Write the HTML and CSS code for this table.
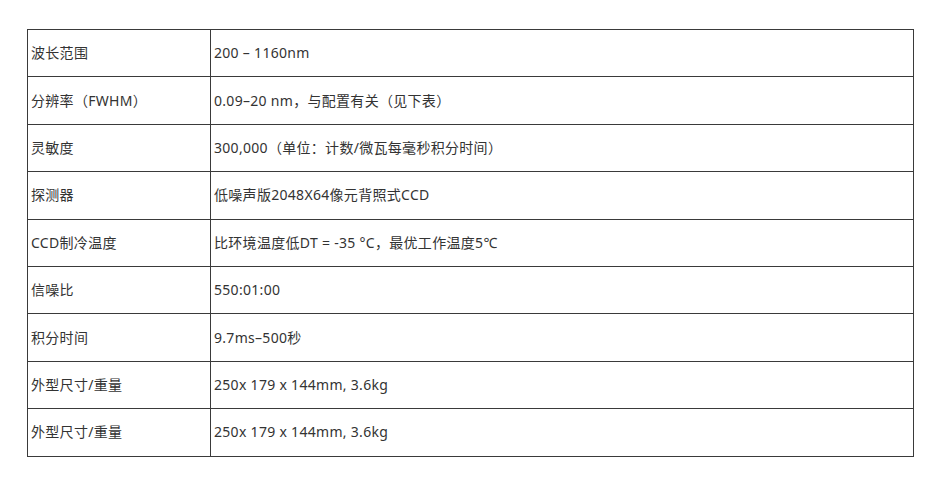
FILE: index.html
```html
<!DOCTYPE html>
<html lang="zh">
<head>
<meta charset="utf-8">
<title>规格参数</title>
<link rel="stylesheet" href="styles.css">
</head>
<body>
<table class="spec">
  <tbody>
    <tr><td class="k">波长范围</td><td class="v">200 – 1160nm</td></tr>
    <tr><td class="k">分辨率（FWHM）</td><td class="v">0.09–20 nm，与配置有关（见下表）</td></tr>
    <tr><td class="k">灵敏度</td><td class="v">300,000（单位：计数/微瓦每毫秒积分时间）</td></tr>
    <tr><td class="k">探测器</td><td class="v">低噪声版2048X64像元背照式CCD</td></tr>
    <tr><td class="k">CCD制冷温度</td><td class="v">比环境温度低DT = -35 °C，最优工作温度5℃</td></tr>
    <tr><td class="k">信噪比</td><td class="v">550:01:00</td></tr>
    <tr><td class="k">积分时间</td><td class="v">9.7ms–500秒</td></tr>
    <tr><td class="k">外型尺寸/重量</td><td class="v">250x 179 x 144mm, 3.6kg</td></tr>
    <tr><td class="k">外型尺寸/重量</td><td class="v">250x 179 x 144mm, 3.6kg</td></tr>
  </tbody>
</table>
</body>
</html>
```
FILE: styles.css
```css
html, body {
  margin: 0;
  padding: 0;
  background: #ffffff;
}
body {
  font-family: "Noto Sans", "Noto Sans CJK SC", sans-serif;
  font-size: 14px;
  letter-spacing: 0.3px;
  color: #333333;
  padding: 29px 0 0 27px;
}
.spec {
  border-collapse: collapse;
  width: 887px;
  table-layout: fixed;
}
.spec td {
  border: 1px solid #3a3a3a;
  height: 46.4px;
  padding: 0 3px;
  vertical-align: middle;
  line-height: 20px;
  white-space: nowrap;
}
.spec td.k {
  width: 176px;
}
```
